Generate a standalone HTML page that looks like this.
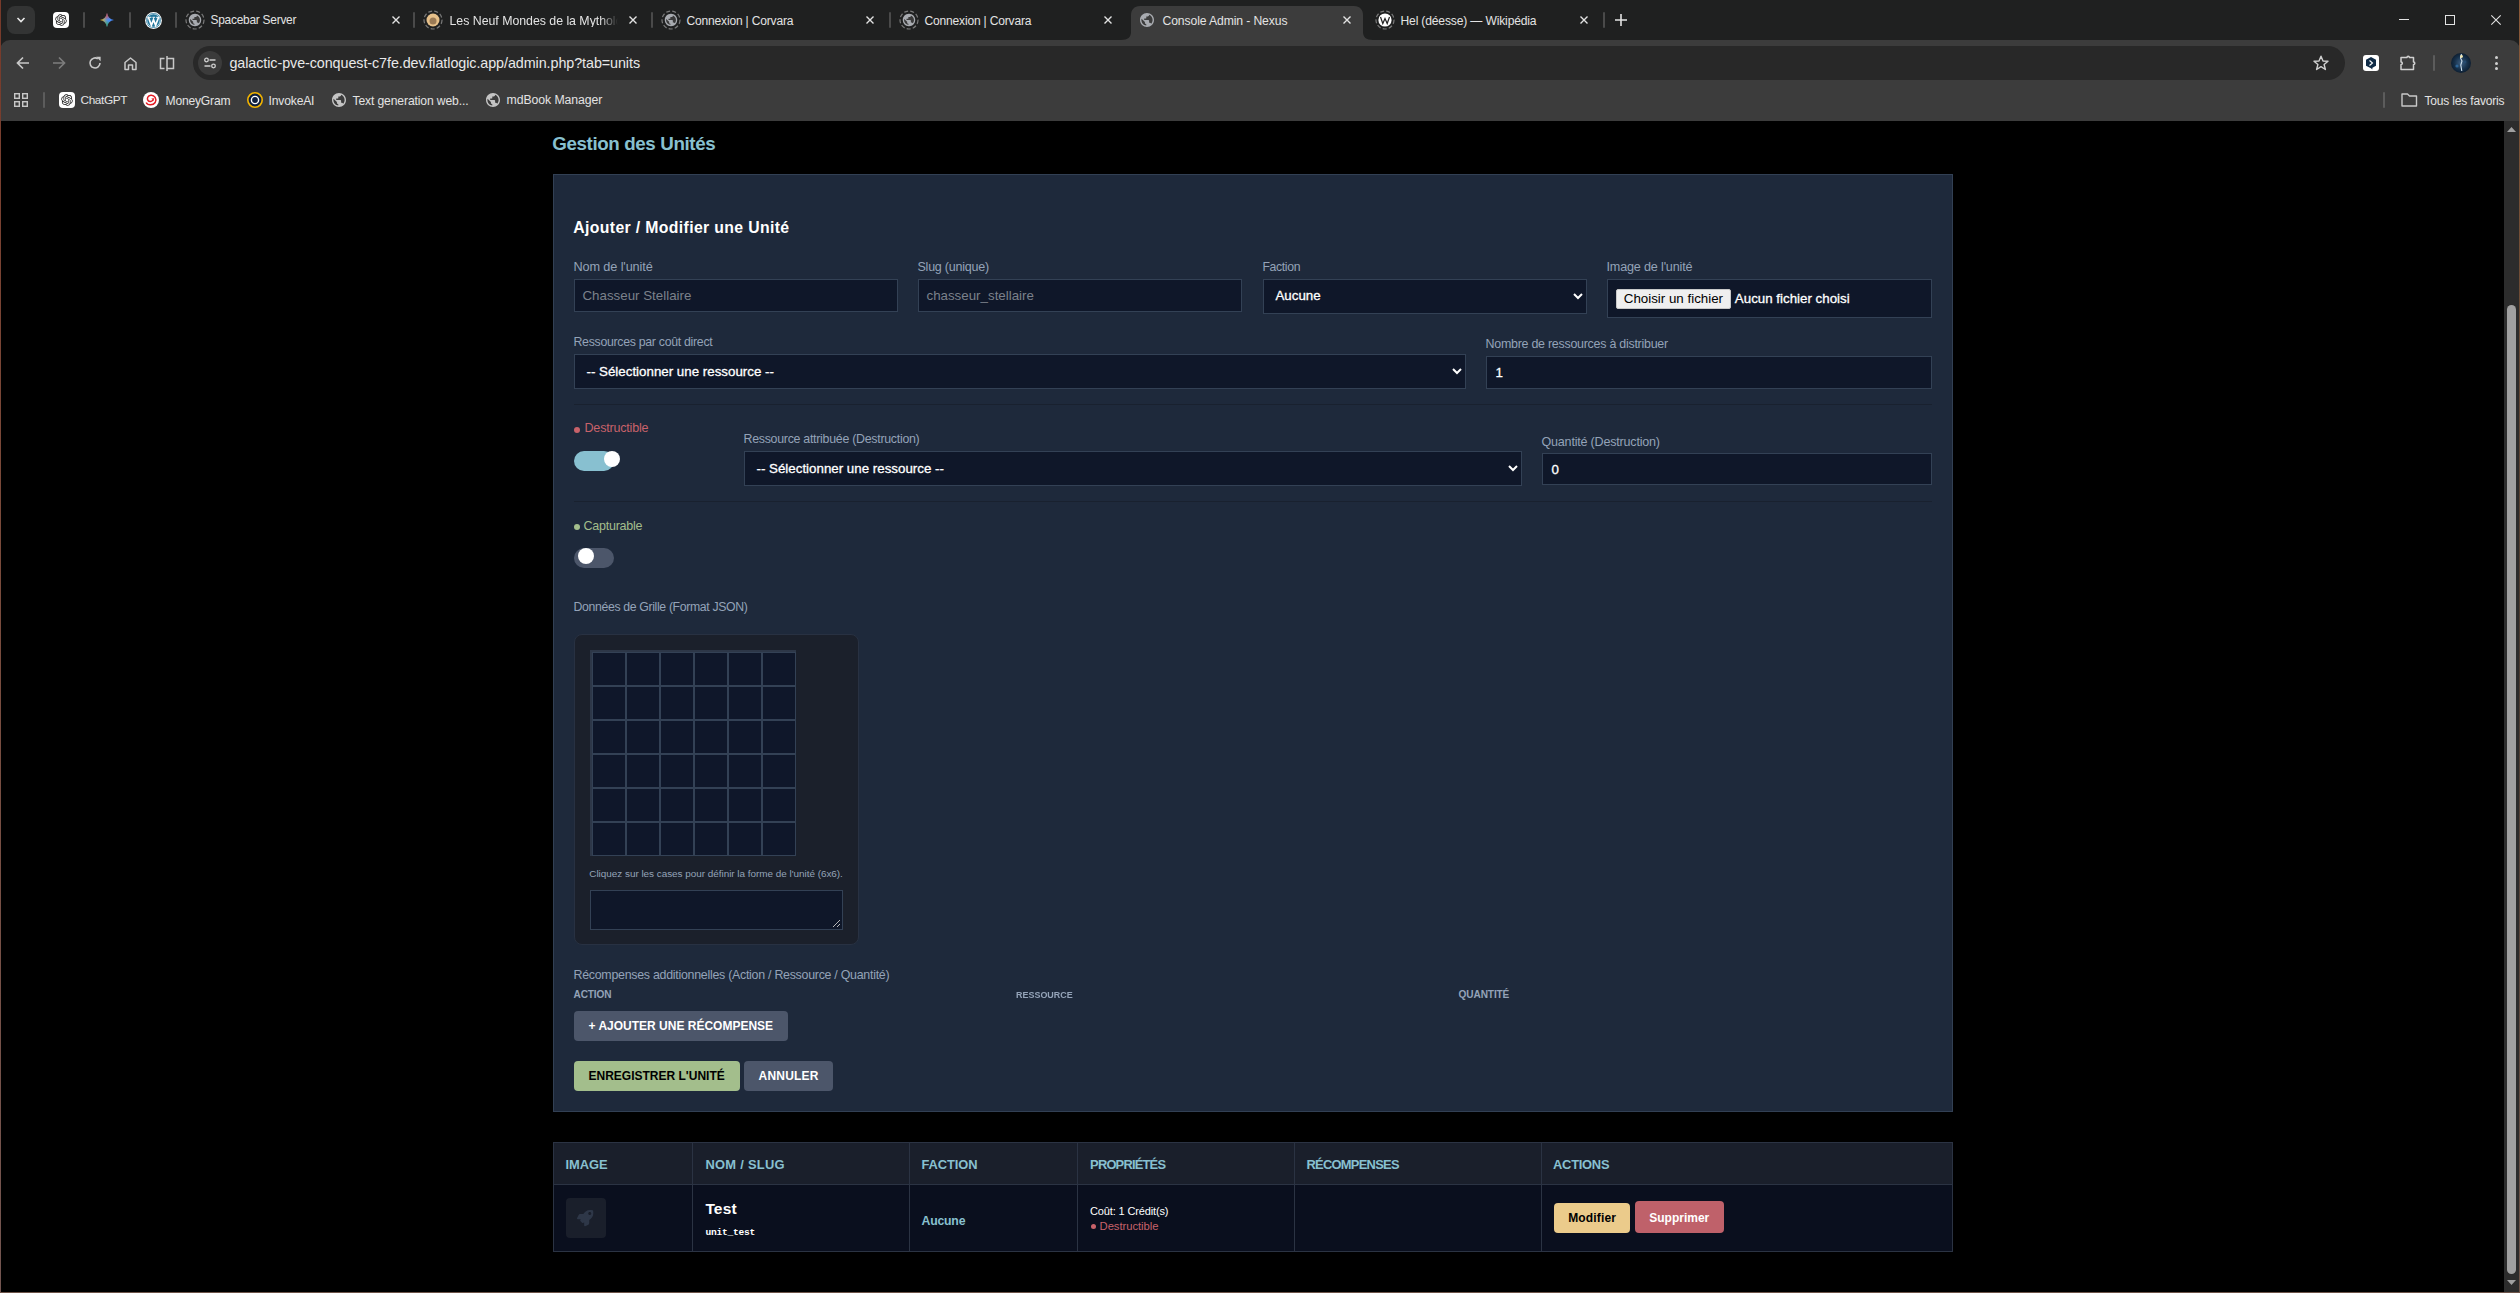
<!DOCTYPE html>
<html lang="fr">
<head>
<meta charset="utf-8">
<title>Console Admin - Nexus</title>
<style>
html,body{margin:0;padding:0;}
body{width:2520px;height:1293px;position:relative;overflow:hidden;background:#000;font-family:"Liberation Sans",sans-serif;}
.a{position:absolute;box-sizing:border-box;}
.t{position:absolute;white-space:pre;line-height:1;}
svg{position:absolute;overflow:visible;}
.sep{position:absolute;width:2px;background:#4a4a4a;border-radius:1px;}
.inp{position:absolute;box-sizing:border-box;background:#0f1729;border:1px solid #334155;}
.btn{position:absolute;box-sizing:border-box;border-radius:4px;}
.hr{position:absolute;height:1px;background:#19212f;}
.vl{position:absolute;width:1px;background:#2b3343;}
</style>
</head>
<body>
<!-- ================= TAB STRIP ================= -->
<div class="a" style="left:0;top:0;width:2520px;height:52px;background:#1f2020;"></div>
<!-- tab search dropdown -->
<div class="a" style="left:7px;top:6px;width:28px;height:28px;border-radius:8px;background:#333434;"></div>
<svg style="left:16px;top:16px" width="10" height="8"><path d="M1.5 2 L5 5.5 L8.5 2" fill="none" stroke="#e8e8e8" stroke-width="1.6"/></svg>
<!-- pinned: chatgpt -->
<div class="a" style="left:53px;top:12px;width:16px;height:16px;border-radius:4px;background:#fff;"></div>
<svg style="left:53px;top:12px" width="16" height="16" viewBox="0 0 16 16"><g transform="translate(2.2 2.2) scale(0.4833)"><path fill="#1a1a1a" d="M22.2819 9.8211a5.9847 5.9847 0 0 0-.5157-4.9108 6.0462 6.0462 0 0 0-6.5098-2.9A6.0651 6.0651 0 0 0 4.9807 4.1818a5.9847 5.9847 0 0 0-3.9977 2.9 6.0462 6.0462 0 0 0 .7427 7.0966 5.98 5.98 0 0 0 .511 4.9107 6.051 6.051 0 0 0 6.5146 2.9001A5.9847 5.9847 0 0 0 13.2599 24a6.0557 6.0557 0 0 0 5.7718-4.2058 5.9894 5.9894 0 0 0 3.9977-2.9001 6.0557 6.0557 0 0 0-.7475-7.0729zm-9.022 12.6081a4.4755 4.4755 0 0 1-2.8764-1.0408l.1419-.0804 4.7783-2.7582a.7948.7948 0 0 0 .3927-.6813v-6.7369l2.02 1.1686a.071.071 0 0 1 .038.052v5.5826a4.504 4.504 0 0 1-4.4945 4.4944zm-9.6607-4.1254a4.4708 4.4708 0 0 1-.5346-3.0137l.142.0852 4.783 2.7582a.7712.7712 0 0 0 .7806 0l5.8428-3.3685v2.3324a.0804.0804 0 0 1-.0332.0615L9.74 19.9502a4.4992 4.4992 0 0 1-6.1408-1.6464zM2.3408 7.8956a4.485 4.485 0 0 1 2.3655-1.9728V11.6a.7664.7664 0 0 0 .3879.6765l5.8144 3.3543-2.0201 1.1685a.0757.0757 0 0 1-.071 0l-4.8303-2.7865A4.504 4.504 0 0 1 2.3408 7.872zm16.5963 3.8558L13.1038 8.364 15.1192 7.2a.0757.0757 0 0 1 .071 0l4.8303 2.7913a4.4944 4.4944 0 0 1-.6765 8.1042v-5.6772a.79.79 0 0 0-.407-.667zm2.0107-3.0231l-.142-.0852-4.7735-2.7818a.7759.7759 0 0 0-.7854 0L9.409 9.2297V6.8974a.0662.0662 0 0 1 .0284-.0615l4.8303-2.7866a4.4992 4.4992 0 0 1 6.6802 4.66zM8.3065 12.863l-2.02-1.1638a.0804.0804 0 0 1-.038-.0567V6.0742a4.4992 4.4992 0 0 1 7.3757-3.4537l-.142.0805L8.704 5.459a.7948.7948 0 0 0-.3927.6813zm1.0976-2.3654l2.602-1.4998 2.6069 1.4998v2.9994l-2.5974 1.4997-2.6067-1.4997Z"/></g></svg>
<div class="sep" style="left:83px;top:12px;height:16px;"></div>
<!-- gemini -->
<svg style="left:100px;top:13px" width="14" height="14" viewBox="0 0 16 16"><defs><linearGradient id="gm1" x1="0" y1="0" x2="1" y2="0"><stop offset="0" stop-color="#fbbc04"/><stop offset="0.55" stop-color="#4c8df6"/><stop offset="1" stop-color="#4285f4"/></linearGradient><radialGradient id="gm2" cx="0.5" cy="0.05" r="0.45"><stop offset="0" stop-color="#ea4335"/><stop offset="1" stop-color="#ea4335" stop-opacity="0"/></radialGradient><radialGradient id="gm3" cx="0.5" cy="0.95" r="0.45"><stop offset="0" stop-color="#34a853"/><stop offset="1" stop-color="#34a853" stop-opacity="0"/></radialGradient></defs><path id="gmp" d="M8 0 C8.7 4.5 11.5 7.3 16 8 C11.5 8.7 8.7 11.5 8 16 C7.3 11.5 4.5 8.7 0 8 C4.5 7.3 7.3 4.5 8 0Z" fill="url(#gm1)"/><path d="M8 0 C8.7 4.5 11.5 7.3 16 8 C11.5 8.7 8.7 11.5 8 16 C7.3 11.5 4.5 8.7 0 8 C4.5 7.3 7.3 4.5 8 0Z" fill="url(#gm2)"/><path d="M8 0 C8.7 4.5 11.5 7.3 16 8 C11.5 8.7 8.7 11.5 8 16 C7.3 11.5 4.5 8.7 0 8 C4.5 7.3 7.3 4.5 8 0Z" fill="url(#gm3)"/></svg>
<div class="sep" style="left:129px;top:12px;height:16px;"></div>
<!-- wordpress -->
<svg style="left:145px;top:12px" width="17" height="17" viewBox="0 0 16 16"><circle cx="8" cy="8" r="7.9" fill="#fff"/><circle cx="8" cy="8" r="7" fill="#21759b"/><circle cx="8" cy="8" r="6.2" fill="none" stroke="#fff" stroke-width="0.6"/><path d="M3.2 5 L6 12.6 L8 7.2 L10 12.6 L12.8 5" fill="none" stroke="#fff" stroke-width="1.6"/><path d="M2.5 5 H6 M7 5 H9.5 M10.5 5 H13.5" stroke="#fff" stroke-width="0.9"/></svg>
<div class="sep" style="left:175px;top:12px;height:16px;"></div>
<!-- tab icons: discarded globe -->
<svg style="left:185px;top:10px" width="20" height="20" viewBox="0 0 20 20"><circle cx="10" cy="10" r="9" fill="none" stroke="#7a7a7a" stroke-width="1.2" stroke-dasharray="4 2.2"/><circle cx="10" cy="10" r="6.3" fill="#3a3a3a"/><g transform="translate(2.56 2.56) scale(0.62)"><path fill="#a8abb0" d="M12 2C6.48 2 2 6.48 2 12s4.48 10 10 10 10-4.48 10-10S17.52 2 12 2zm-1 17.93c-3.95-.49-7-3.85-7-7.93 0-.62.08-1.21.21-1.79L9 15v1c0 1.1.9 2 2 2v1.930zm6.9-2.54c-.26-.81-1-1.390-1.9-1.39h-1v-3c0-.55-.45-1-1-1H8v-2h2c.55 0 1-.45 1-1V7h2c1.1 0 2-.9 2-2v-.41c2.93 1.19 5 4.06 5 7.41 0 2.080-.8 3.970-2.1 5.39z"/></g></svg>
<svg style="left:392px;top:16px" width="8" height="8"><path d="M0.5 0.5 L7.5 7.5 M7.5 0.5 L0.5 7.5" stroke="#e3e3e3" stroke-width="1.4"/></svg>
<div class="sep" style="left:413px;top:12px;height:16px;"></div>
<svg style="left:423px;top:10px" width="20" height="20" viewBox="0 0 20 20"><circle cx="10" cy="10" r="9" fill="none" stroke="#7a7a7a" stroke-width="1.2" stroke-dasharray="4 2.2"/><circle cx="10" cy="10" r="6.5" fill="#e6c08a"/><circle cx="10" cy="11" r="3.5" fill="#9a7a55"/></svg>
<svg style="left:629px;top:16px" width="8" height="8"><path d="M0.5 0.5 L7.5 7.5 M7.5 0.5 L0.5 7.5" stroke="#e3e3e3" stroke-width="1.4"/></svg>
<div class="sep" style="left:651px;top:12px;height:16px;"></div>
<svg style="left:661px;top:10px" width="20" height="20" viewBox="0 0 20 20"><circle cx="10" cy="10" r="9" fill="none" stroke="#7a7a7a" stroke-width="1.2" stroke-dasharray="4 2.2"/><circle cx="10" cy="10" r="6.3" fill="#3a3a3a"/><g transform="translate(2.56 2.56) scale(0.62)"><path fill="#a8abb0" d="M12 2C6.48 2 2 6.48 2 12s4.48 10 10 10 10-4.48 10-10S17.52 2 12 2zm-1 17.93c-3.95-.49-7-3.85-7-7.93 0-.62.08-1.21.21-1.79L9 15v1c0 1.1.9 2 2 2v1.930zm6.9-2.54c-.26-.81-1-1.390-1.9-1.39h-1v-3c0-.55-.45-1-1-1H8v-2h2c.55 0 1-.45 1-1V7h2c1.1 0 2-.9 2-2v-.41c2.93 1.19 5 4.06 5 7.41 0 2.080-.8 3.970-2.1 5.39z"/></g></svg>
<svg style="left:866px;top:16px" width="8" height="8"><path d="M0.5 0.5 L7.5 7.5 M7.5 0.5 L0.5 7.5" stroke="#e3e3e3" stroke-width="1.4"/></svg>
<div class="sep" style="left:889px;top:12px;height:16px;"></div>
<svg style="left:899px;top:10px" width="20" height="20" viewBox="0 0 20 20"><circle cx="10" cy="10" r="9" fill="none" stroke="#7a7a7a" stroke-width="1.2" stroke-dasharray="4 2.2"/><circle cx="10" cy="10" r="6.3" fill="#3a3a3a"/><g transform="translate(2.56 2.56) scale(0.62)"><path fill="#a8abb0" d="M12 2C6.48 2 2 6.48 2 12s4.48 10 10 10 10-4.48 10-10S17.52 2 12 2zm-1 17.93c-3.95-.49-7-3.85-7-7.93 0-.62.08-1.21.21-1.79L9 15v1c0 1.1.9 2 2 2v1.930zm6.9-2.54c-.26-.81-1-1.390-1.9-1.39h-1v-3c0-.55-.45-1-1-1H8v-2h2c.55 0 1-.45 1-1V7h2c1.1 0 2-.9 2-2v-.41c2.93 1.19 5 4.06 5 7.41 0 2.080-.8 3.970-2.1 5.39z"/></g></svg>
<svg style="left:1104px;top:16px" width="8" height="8"><path d="M0.5 0.5 L7.5 7.5 M7.5 0.5 L0.5 7.5" stroke="#e3e3e3" stroke-width="1.4"/></svg>
<!-- active tab -->
<svg style="left:1121px;top:6px" width="252" height="34" viewBox="0 0 252 34"><path d="M0 34 C7 34 10 31 10 26 L10 9 C10 4 13 0 19 0 L233 0 C239 0 242 4 242 9 L242 26 C242 31 245 34 252 34 Z" fill="#3c3c3c"/></svg>
<svg style="left:1140px;top:13px" width="14" height="14" viewBox="0 0 14 14"><g transform="translate(-1.4 -1.4) scale(0.7)"><path fill="#a8abb0" d="M12 2C6.48 2 2 6.48 2 12s4.48 10 10 10 10-4.48 10-10S17.52 2 12 2zm-1 17.93c-3.95-.49-7-3.85-7-7.930 0-.62.08-1.21.21-1.79L9 15v1c0 1.1.9 2 2 2v1.93zm6.9-2.54c-.26-.81-1-1.39-1.9-1.39h-1v-3c0-.55-.45-1-1-1H8v-2h2c.55 0 1-.45 1-1V7h2c1.1 0 2-.9 2-2v-.41c2.93 1.19 5 4.06 5 7.41 0 2.08-.8 3.97-2.1 5.39z"/></g></svg>
<svg style="left:1343px;top:16px" width="8" height="8"><path d="M0.5 0.5 L7.5 7.5 M7.5 0.5 L0.5 7.5" stroke="#e3e3e3" stroke-width="1.4"/></svg>
<!-- wikipedia tab -->
<svg style="left:1375px;top:10px" width="20" height="20" viewBox="0 0 20 20"><circle cx="10" cy="10" r="9" fill="none" stroke="#7a7a7a" stroke-width="1.2" stroke-dasharray="4 2.2"/><circle cx="10" cy="10" r="6.6" fill="#fff"/><path d="M5.5 7 L7.8 13.5 L10 8.5 L12.2 13.5 L14.5 7" fill="none" stroke="#222" stroke-width="1.2"/></svg>
<svg style="left:1580px;top:16px" width="8" height="8"><path d="M0.5 0.5 L7.5 7.5 M7.5 0.5 L0.5 7.5" stroke="#e3e3e3" stroke-width="1.4"/></svg>
<div class="sep" style="left:1603px;top:12px;height:16px;"></div>
<svg style="left:1615px;top:14px" width="12" height="12"><path d="M6 0 V12 M0 6 H12" stroke="#e3e3e3" stroke-width="1.6"/></svg>
<!-- window controls -->
<div class="a" style="left:2399px;top:19px;width:10px;height:1px;background:#e3e3e3;"></div>
<div class="a" style="left:2445px;top:15px;width:10px;height:10px;border:1px solid #e3e3e3;"></div>
<svg style="left:2491px;top:15px" width="10" height="10"><path d="M0.3 0.3 L9.7 9.7 M9.7 0.3 L0.3 9.7" stroke="#e3e3e3" stroke-width="1.1"/></svg>

<!-- ================= TOOLBAR + BOOKMARKS ================= -->
<div class="a" style="left:0;top:40px;width:2520px;height:81px;background:#3c3c3c;border-radius:10px 10px 0 0;"></div>
<!-- back -->
<svg style="left:16px;top:56px" width="14" height="14" viewBox="0 0 14 14"><path d="M13 7 H1.8 M7 1.5 L1.5 7 L7 12.5" fill="none" stroke="#c8c8c8" stroke-width="1.7"/></svg>
<!-- forward -->
<svg style="left:52px;top:56px" width="14" height="14" viewBox="0 0 14 14"><path d="M1 7 H12.2 M7 1.5 L12.5 7 L7 12.5" fill="none" stroke="#7d7d7d" stroke-width="1.7"/></svg>
<!-- reload -->
<svg style="left:88px;top:56px" width="14" height="14" viewBox="0 0 14 14"><path d="M12 7 A5 5 0 1 1 9.8 2.8" fill="none" stroke="#c8c8c8" stroke-width="1.6"/><path d="M8.2 0.8 L12.6 0.8 L12.6 5.2 Z" fill="#c8c8c8"/></svg>
<!-- home -->
<svg style="left:123px;top:56px" width="15" height="15" viewBox="0 0 15 15"><path d="M2 13.5 V6.5 L7.5 2 L13 6.5 V13.5 H9.5 V9 H5.5 V13.5 Z" fill="none" stroke="#c8c8c8" stroke-width="1.5" stroke-linejoin="round"/></svg>
<!-- split -->
<svg style="left:159px;top:55px" width="16" height="17" viewBox="0 0 16 17"><path d="M5.5 3.5 H1.5 V13.5 H5.5 M8 1 V16 M8 3.5 H14.5 V13.5 H8" fill="none" stroke="#c8c8c8" stroke-width="1.5"/></svg>
<!-- omnibox -->
<div class="a" style="left:193px;top:46px;width:2152px;height:34px;border-radius:17px;background:#282828;"></div>
<div class="a" style="left:198px;top:51px;width:24px;height:24px;border-radius:12px;background:#3b3b3b;"></div>
<svg style="left:203px;top:56px" width="14" height="14" viewBox="0 0 14 14"><g fill="none" stroke="#d0d0d0" stroke-width="1.3"><circle cx="3.5" cy="4" r="1.8"/><path d="M6.5 4 H12.5 M1.5 10 H7.5"/><circle cx="10.5" cy="10" r="1.8"/></g></svg>
<!-- star -->
<svg style="left:2313px;top:55px" width="16" height="16" viewBox="0 0 16 16"><path d="M8 1.2 L10 6 L15 6.3 L11.1 9.5 L12.4 14.5 L8 11.7 L3.6 14.5 L4.9 9.5 L1 6.3 L6 6 Z" fill="none" stroke="#d0d0d0" stroke-width="1.4" stroke-linejoin="round"/></svg>
<!-- deepl -->
<div class="a" style="left:2363px;top:55px;width:16px;height:16px;border-radius:3px;background:#fff;"></div>
<svg style="left:2363px;top:55px" width="16" height="16" viewBox="0 0 16 16"><path d="M8 2 L13 4.8 V10.8 L9.5 12.8 L9.2 14.5 L8 13.3 L3 10.8 V4.8 Z" fill="#0f2b46"/><path d="M6.5 5.5 L9.5 8 L6.5 10.5" fill="none" stroke="#fff" stroke-width="1.1"/></svg>
<!-- puzzle -->
<svg style="left:2399px;top:54px" width="18" height="18" viewBox="0 0 18 18"><path d="M2 3.5 H8 A1.2 1.2 0 0 1 10.4 3.5 H14.5 V8 A1.3 1.3 0 0 1 14.5 10.6 V15.5 H2 V10.5 C3.8 10.5 3.8 8 2 8 Z" fill="none" stroke="#d0d0d0" stroke-width="1.5" stroke-linejoin="round"/></svg>
<div class="sep" style="left:2433px;top:55px;height:16px;background:#5c5c5c;"></div>
<!-- avatar -->
<svg style="left:2451px;top:53px" width="20" height="20" viewBox="0 0 20 20"><defs><radialGradient id="av" cx="0.5" cy="0.5" r="0.6"><stop offset="0" stop-color="#3d5f82"/><stop offset="0.55" stop-color="#16304a"/><stop offset="1" stop-color="#081422"/></radialGradient></defs><circle cx="10" cy="10" r="10" fill="url(#av)"/><path d="M10.5 1 L9.5 5 L11 8 L9.8 12 L10.8 18" fill="none" stroke="#cfe0ee" stroke-width="1.1"/><circle cx="10.5" cy="3.5" r="1.4" fill="#f0e6b0"/><circle cx="6" cy="13" r="1.6" fill="#2f6fa8" opacity="0.8"/><circle cx="14" cy="9" r="1.4" fill="#254c74" opacity="0.8"/></svg>
<!-- menu dots -->
<div class="a" style="left:2495px;top:56px;width:3.4px;height:3.4px;border-radius:2px;background:#d0d0d0;"></div>
<div class="a" style="left:2495px;top:61.5px;width:3.4px;height:3.4px;border-radius:2px;background:#d0d0d0;"></div>
<div class="a" style="left:2495px;top:67px;width:3.4px;height:3.4px;border-radius:2px;background:#d0d0d0;"></div>

<!-- bookmarks bar -->
<svg style="left:14px;top:93px" width="14" height="14" viewBox="0 0 14 14"><g fill="none" stroke="#c8c8c8" stroke-width="1.4"><rect x="0.7" y="0.7" width="4.6" height="4.6"/><rect x="8.7" y="0.7" width="4.6" height="4.6"/><rect x="0.7" y="8.7" width="4.6" height="4.6"/><rect x="8.7" y="8.7" width="4.6" height="4.6"/></g></svg>
<div class="sep" style="left:43px;top:92px;height:16px;background:#5c5c5c;"></div>
<div class="a" style="left:59px;top:92px;width:16px;height:16px;border-radius:4px;background:#fff;"></div>
<svg style="left:59px;top:92px" width="16" height="16" viewBox="0 0 16 16"><g transform="translate(2.2 2.2) scale(0.4833)"><path fill="#1a1a1a" d="M22.2819 9.8211a5.9847 5.9847 0 0 0-.5157-4.9108 6.0462 6.0462 0 0 0-6.5098-2.9A6.0651 6.0651 0 0 0 4.9807 4.1818a5.9847 5.9847 0 0 0-3.9977 2.9 6.0462 6.0462 0 0 0 .7427 7.0966 5.98 5.98 0 0 0 .511 4.9107 6.051 6.051 0 0 0 6.5146 2.9001A5.9847 5.9847 0 0 0 13.2599 24a6.0557 6.0557 0 0 0 5.7718-4.2058 5.9894 5.9894 0 0 0 3.9977-2.9001 6.0557 6.0557 0 0 0-.7475-7.0729zm-9.022 12.6081a4.4755 4.4755 0 0 1-2.8764-1.0408l.1419-.0804 4.7783-2.7582a.7948.7948 0 0 0 .3927-.6813v-6.7369l2.02 1.1686a.071.071 0 0 1 .038.052v5.5826a4.504 4.504 0 0 1-4.4945 4.4944zm-9.6607-4.1254a4.4708 4.4708 0 0 1-.5346-3.0137l.142.0852 4.783 2.7582a.7712.7712 0 0 0 .7806 0l5.8428-3.3685v2.3324a.0804.0804 0 0 1-.0332.0615L9.74 19.9502a4.4992 4.4992 0 0 1-6.1408-1.6464zM2.3408 7.8956a4.485 4.485 0 0 1 2.3655-1.9728V11.6a.7664.7664 0 0 0 .3879.6765l5.8144 3.3543-2.0201 1.1685a.0757.0757 0 0 1-.071 0l-4.8303-2.7865A4.504 4.504 0 0 1 2.3408 7.872zm16.5963 3.8558L13.1038 8.364 15.1192 7.2a.0757.0757 0 0 1 .071 0l4.8303 2.7913a4.4944 4.4944 0 0 1-.6765 8.1042v-5.6772a.79.79 0 0 0-.407-.667zm2.0107-3.0231l-.142-.0852-4.7735-2.7818a.7759.7759 0 0 0-.7854 0L9.409 9.2297V6.8974a.0662.0662 0 0 1 .0284-.0615l4.8303-2.7866a4.4992 4.4992 0 0 1 6.6802 4.66zM8.3065 12.863l-2.02-1.1638a.0804.0804 0 0 1-.038-.0567V6.0742a4.4992 4.4992 0 0 1 7.3757-3.4537l-.142.0805L8.704 5.459a.7948.7948 0 0 0-.3927.6813zm1.0976-2.3654l2.602-1.4998 2.6069 1.4998v2.9994l-2.5974 1.4997-2.6067-1.4997Z"/></g></svg>
<svg style="left:143px;top:92px" width="16" height="16" viewBox="0 0 16 16"><circle cx="8" cy="8" r="8" fill="#fff"/><path d="M3.2 10.5 C4.5 13.5 10 13.8 12.2 10.5 C14.2 7 11.5 2.8 7.8 3.2 C4.8 3.5 3.6 6.6 5 8.5 C6.2 10.2 9 9.8 10 8" fill="none" stroke="#e31b23" stroke-width="1.5"/><path d="M8.3 6.6 L11.2 6.2 L10.6 9.1 Z" fill="#e31b23"/></svg>
<svg style="left:247px;top:92px" width="16" height="16" viewBox="0 0 16 16"><circle cx="8" cy="8" r="7.2" fill="#0f1f3d" stroke="#f2b400" stroke-width="1.6"/><circle cx="8" cy="8" r="3.6" fill="none" stroke="#fff" stroke-width="1.4"/><circle cx="8" cy="8" r="2" fill="#0f1f3d"/></svg>
<svg style="left:332px;top:93px" width="14" height="14" viewBox="0 0 14 14"><g transform="translate(-1.4 -1.4) scale(0.7)"><path fill="#c4c4c4" d="M12 2C6.48 2 2 6.48 2 12s4.48 10 10 10 10-4.48 10-10S17.52 2 12 2zm-1 17.93c-3.95-.49-7-3.85-7-7.93 0-.62.08-1.21.21-1.79L9 15v1c0 1.1.9 2 2 2v1.93zm6.9-2.54c-.26-.81-1-1.39-1.9-1.39h-1v-3c0-.55-.45-1-1-1H8v-2h2c.55 0 1-.45 1-1V7h2c1.1 0 2-.9 2-2v-.41c2.93 1.19 5 4.06 5 7.41 0 2.08-.8 3.97-2.1 5.39z"/></g></svg>
<svg style="left:486px;top:93px" width="14" height="14" viewBox="0 0 14 14"><g transform="translate(-1.4 -1.4) scale(0.7)"><path fill="#c4c4c4" d="M12 2C6.48 2 2 6.48 2 12s4.48 10 10 10 10-4.48 10-10S17.52 2 12 2zm-1 17.93c-3.95-.49-7-3.85-7-7.93 0-.62.08-1.21.21-1.79L9 15v1c0 1.1.9 2 2 2v1.93zm6.9-2.54c-.26-.81-1-1.39-1.9-1.39h-1v-3c0-.55-.45-1-1-1H8v-2h2c.55 0 1-.45 1-1V7h2c1.1 0 2-.9 2-2v-.41c2.93 1.19 5 4.06 5 7.41 0 2.08-.8 3.97-2.1 5.39z"/></g></svg>
<div class="sep" style="left:2383px;top:92px;height:16px;background:#5c5c5c;"></div>
<svg style="left:2401px;top:93px" width="17" height="14" viewBox="0 0 17 14"><path d="M1 1 H6.5 L8.5 3 H15.5 V13 H1 Z" fill="none" stroke="#c8c8c8" stroke-width="1.4" stroke-linejoin="round"/></svg>

<!-- window border -->
<div class="a" style="left:0;top:0;width:1px;height:1293px;background:linear-gradient(#773a2a,#7a4a3a 40%,#735550);"></div>
<div class="a" style="left:2519px;top:0;width:1px;height:1293px;background:linear-gradient(#8a5a3a,#4a3a30 50%,#6e5449);"></div>
<div class="a" style="left:0;top:1292px;width:2520px;height:1px;background:#6e5449;"></div>

<!-- ================= PAGE ================= -->
<!-- scrollbar -->
<div class="a" style="left:2504px;top:121px;width:15px;height:1171px;background:#2c2c2c;"></div>
<div class="a" style="left:2507px;top:305px;width:9px;height:969px;border-radius:4.5px;background:#a0a0a0;"></div>
<svg style="left:2507px;top:127px" width="9" height="5"><path d="M0 5 L4.5 0 L9 5 Z" fill="#a0a0a0"/></svg>
<svg style="left:2507px;top:1280px" width="9" height="5"><path d="M0 0 L4.5 5 L9 0 Z" fill="#a0a0a0"/></svg>

<!-- form container -->
<div class="a" style="left:553px;top:174px;width:1400px;height:938px;background:#1e293b;border:1px solid #324054;"></div>

<!-- row1 inputs -->
<div class="inp" style="left:574px;top:279px;width:324px;height:33px;"></div>
<div class="inp" style="left:918px;top:279px;width:324px;height:33px;"></div>
<div class="inp" style="left:1263px;top:279px;width:324px;height:35px;"></div>
<svg style="left:1573px;top:293px" width="10" height="7"><path d="M1 1 L5 5 L9 1" fill="none" stroke="#fff" stroke-width="2"/></svg>
<div class="inp" style="left:1607px;top:279px;width:325px;height:39px;"></div>
<div class="a" style="left:1616px;top:288.5px;width:115px;height:20.5px;background:#efefef;border:1px solid #c8c8c8;border-radius:2px;"></div>

<!-- row2 -->
<div class="inp" style="left:574px;top:354px;width:892px;height:35px;"></div>
<svg style="left:1452px;top:368px" width="10" height="7"><path d="M1 1 L5 5 L9 1" fill="none" stroke="#fff" stroke-width="2"/></svg>
<div class="inp" style="left:1486px;top:356px;width:446px;height:33px;"></div>
<div class="hr" style="left:574px;top:404px;width:1358px;"></div>

<!-- row3 -->
<div class="a" style="left:574px;top:427px;width:6px;height:6px;border-radius:3px;background:#c8626a;"></div>
<div class="a" style="left:574px;top:451px;width:40px;height:20px;border-radius:10px;background:#88c0d0;"></div>
<div class="a" style="left:604px;top:451px;width:16px;height:16px;border-radius:8px;background:#fff;"></div>
<div class="inp" style="left:744px;top:451px;width:778px;height:35px;"></div>
<svg style="left:1508px;top:464.5px" width="10" height="7"><path d="M1 1 L5 5 L9 1" fill="none" stroke="#fff" stroke-width="2"/></svg>
<div class="inp" style="left:1542px;top:453px;width:390px;height:32px;"></div>
<div class="hr" style="left:574px;top:501px;width:1358px;"></div>

<!-- row4 -->
<div class="a" style="left:574px;top:524px;width:6px;height:6px;border-radius:3px;background:#a3be8c;"></div>
<div class="a" style="left:574px;top:548px;width:40px;height:20px;border-radius:10px;background:#4c566a;"></div>
<div class="a" style="left:578px;top:548px;width:16px;height:16px;border-radius:8px;background:#fff;"></div>

<!-- grid box -->
<div class="a" style="left:574px;top:634px;width:285px;height:311px;border-radius:8px;background:#1b202b;border:1px solid #283142;"></div>
<div class="a" style="left:590px;top:650px;width:206px;height:206px;background:#2d3748;"></div>
<svg style="left:592px;top:652px" width="204" height="204" viewBox="0 0 204 204">
<rect x="0" y="0" width="204" height="204" fill="#334155"/>
<g fill="#0f172a">
<rect x="1" y="1" width="32" height="32"/><rect x="1" y="35" width="32" height="32"/><rect x="1" y="69" width="32" height="32"/><rect x="1" y="103" width="32" height="32"/><rect x="1" y="137" width="32" height="32"/><rect x="1" y="171" width="32" height="32"/><rect x="35" y="1" width="32" height="32"/><rect x="35" y="35" width="32" height="32"/><rect x="35" y="69" width="32" height="32"/><rect x="35" y="103" width="32" height="32"/><rect x="35" y="137" width="32" height="32"/><rect x="35" y="171" width="32" height="32"/><rect x="69" y="1" width="32" height="32"/><rect x="69" y="35" width="32" height="32"/><rect x="69" y="69" width="32" height="32"/><rect x="69" y="103" width="32" height="32"/><rect x="69" y="137" width="32" height="32"/><rect x="69" y="171" width="32" height="32"/><rect x="103" y="1" width="32" height="32"/><rect x="103" y="35" width="32" height="32"/><rect x="103" y="69" width="32" height="32"/><rect x="103" y="103" width="32" height="32"/><rect x="103" y="137" width="32" height="32"/><rect x="103" y="171" width="32" height="32"/><rect x="137" y="1" width="32" height="32"/><rect x="137" y="35" width="32" height="32"/><rect x="137" y="69" width="32" height="32"/><rect x="137" y="103" width="32" height="32"/><rect x="137" y="137" width="32" height="32"/><rect x="137" y="171" width="32" height="32"/><rect x="171" y="1" width="32" height="32"/><rect x="171" y="35" width="32" height="32"/><rect x="171" y="69" width="32" height="32"/><rect x="171" y="103" width="32" height="32"/><rect x="171" y="137" width="32" height="32"/><rect x="171" y="171" width="32" height="32"/>
</g></svg>
<div class="inp" style="left:590px;top:890px;width:253px;height:40px;"></div>
<svg style="left:832px;top:919px" width="9" height="9"><path d="M8 1 L1 8 M8 5 L5 8" stroke="#b8b8b8" stroke-width="1"/></svg>

<!-- buttons -->
<div class="btn" style="left:574px;top:1011px;width:214px;height:30px;background:#4c566a;"></div>
<div class="btn" style="left:574px;top:1061px;width:166px;height:30px;background:#a3be8c;"></div>
<div class="btn" style="left:744px;top:1061px;width:89px;height:30px;background:#4c566a;"></div>

<!-- table -->
<div class="a" style="left:553px;top:1142px;width:1400px;height:110px;background:#0a0f1e;border:1px solid #2b3343;"></div>
<div class="a" style="left:554px;top:1143px;width:1398px;height:41px;background:#1a1f2b;"></div>
<div class="a" style="left:554px;top:1184px;width:1398px;height:1px;background:#2b3343;"></div>
<div class="vl" style="left:692px;top:1143px;height:108px;"></div>
<div class="vl" style="left:909px;top:1143px;height:108px;"></div>
<div class="vl" style="left:1077px;top:1143px;height:108px;"></div>
<div class="vl" style="left:1294px;top:1143px;height:108px;"></div>
<div class="vl" style="left:1541px;top:1143px;height:108px;"></div>
<div class="a" style="left:566px;top:1198px;width:40px;height:40px;border-radius:4px;background:#1a1f2b;"></div>
<svg style="left:577.3px;top:1210px" width="16.3" height="16.3" viewBox="0 0 512 512"><path fill="#2e3748" d="M505.1 19.1C503.8 13 499 8.2 492.9 6.9 460.7 0 435.5 0 410.4 0 307.2 0 245.3 55.2 199.1 128H94.9c-18.2 0-34.8 10.3-42.9 26.5L2.6 253.3c-8 16 3.6 34.7 21.5 34.7h95.1c-5.9 12.8-11.9 25.5-18 37.7-3.1 6.2-1.9 13.6 3 18.5l63.6 63.6c4.9 4.9 12.3 6.1 18.5 3 12.2-6.1 24.9-12 37.7-17.9V488c0 17.8 18.8 29.4 34.7 21.5l98.7-49.4c16.3-8.1 26.5-24.8 26.5-42.9V312.8c72.6-46.3 128-108.4 128-211.1.1-25.2.1-50.4-6.8-82.6zM400 160c-26.5 0-48-21.5-48-48s21.5-48 48-48 48 21.5 48 48-21.5 48-48 48z"/></svg>
<div class="a" style="left:1091px;top:1224px;width:5px;height:5px;border-radius:3px;background:#c8626a;"></div>
<div class="btn" style="left:1554px;top:1203px;width:76px;height:30px;background:#ebcb8b;"></div>
<div class="btn" style="left:1635px;top:1201px;width:89px;height:32px;background:#bf616a;"></div>

<span class="t" style="left:210.52px;top:15.40px;font-size:11.92px;color:#e3e3e3;letter-spacing:-0.245px;">Spacebar Server</span>
<span class="t" style="left:449.51px;top:15.04px;font-size:12.35px;color:#e3e3e3;letter-spacing:-0.023px;-webkit-mask-image:linear-gradient(90deg,#000 150px,transparent 168px);">Les Neuf Mondes de la Mytholo</span>
<span class="t" style="left:686.52px;top:15.30px;font-size:12.04px;color:#e3e3e3;letter-spacing:-0.176px;">Connexion | Corvara</span>
<span class="t" style="left:924.52px;top:15.30px;font-size:12.04px;color:#e3e3e3;letter-spacing:-0.176px;">Connexion | Corvara</span>
<span class="t" style="left:1162.51px;top:15.18px;font-size:12.18px;color:#e3e3e3;letter-spacing:-0.111px;">Console Admin - Nexus</span>
<span class="t" style="left:1400.52px;top:15.27px;font-size:12.08px;color:#e3e3e3;letter-spacing:-0.155px;">Hel (déesse) — Wikipédia</span>
<span class="t" style="left:229.43px;top:55.85px;font-size:14.34px;color:#e8e8e8;letter-spacing:-0.071px;">galactic-pve-conquest-c7fe.dev.flatlogic.app/admin.php?tab=units</span>
<span class="t" style="left:80.53px;top:94.79px;font-size:11.82px;color:#e3e3e3;letter-spacing:-0.379px;">ChatGPT</span>
<span class="t" style="left:165.52px;top:94.55px;font-size:12.1px;color:#e3e3e3;letter-spacing:-0.196px;">MoneyGram</span>
<span class="t" style="left:268.52px;top:94.55px;font-size:12.1px;color:#e3e3e3;letter-spacing:-0.157px;">InvokeAI</span>
<span class="t" style="left:352.51px;top:94.53px;font-size:12.13px;color:#e3e3e3;letter-spacing:-0.123px;">Text generation web...</span>
<span class="t" style="left:506.51px;top:94.40px;font-size:12.28px;color:#e3e3e3;letter-spacing:-0.070px;">mdBook Manager</span>
<span class="t" style="left:2424.52px;top:94.64px;font-size:12.0px;color:#e3e3e3;letter-spacing:-0.177px;">Tous les favoris</span>
<span class="t" style="left:552.25px;top:134.71px;font-size:18.76px;color:#88c0d0;font-weight:700;letter-spacing:-0.377px;">Gestion des Unités</span>
<span class="t" style="left:573.37px;top:220.42px;font-size:15.8px;color:#fff;font-weight:700;letter-spacing:0.352px;">Ajouter / Modifier une Unité</span>
<span class="t" style="left:573.49px;top:260.62px;font-size:12.73px;color:#94a3b8;letter-spacing:-0.128px;">Nom de l'unité</span>
<span class="t" style="left:917.50px;top:260.80px;font-size:12.51px;color:#94a3b8;letter-spacing:-0.232px;">Slug (unique)</span>
<span class="t" style="left:1262.51px;top:261.02px;font-size:12.26px;color:#94a3b8;letter-spacing:-0.372px;">Faction</span>
<span class="t" style="left:1606.50px;top:260.72px;font-size:12.61px;color:#94a3b8;letter-spacing:-0.175px;">Image de l'unité</span>
<span class="t" style="left:573.51px;top:335.55px;font-size:12.34px;color:#94a3b8;letter-spacing:-0.298px;">Ressources par coût direct</span>
<span class="t" style="left:1485.50px;top:338.06px;font-size:12.44px;color:#94a3b8;letter-spacing:-0.255px;">Nombre de ressources à distribuer</span>
<span class="t" style="left:743.50px;top:433.11px;font-size:12.38px;color:#94a3b8;letter-spacing:-0.275px;">Ressource attribuée (Destruction)</span>
<span class="t" style="left:1541.50px;top:436.17px;font-size:12.55px;color:#94a3b8;letter-spacing:-0.200px;">Quantité (Destruction)</span>
<span class="t" style="left:573.51px;top:601.21px;font-size:12.27px;color:#94a3b8;letter-spacing:-0.345px;">Données de Grille (Format JSON)</span>
<span class="t" style="left:573.50px;top:969.10px;font-size:12.4px;color:#94a3b8;letter-spacing:-0.267px;">Récompenses additionnelles (Action / Ressource / Quantité)</span>
<span class="t" style="left:584.50px;top:422.37px;font-size:12.55px;color:#c8626a;letter-spacing:-0.205px;">Destructible</span>
<span class="t" style="left:583.50px;top:520.20px;font-size:12.52px;color:#a3be8c;letter-spacing:-0.249px;">Capturable</span>
<span class="t" style="left:582.47px;top:288.71px;font-size:13.333px;color:#7b818b;">Chasseur Stellaire</span>
<span class="t" style="left:926.47px;top:288.71px;font-size:13.333px;color:#7b818b;">chasseur_stellaire</span>
<span class="t" style="left:1275.47px;top:289.41px;font-size:13.333px;color:#fff;-webkit-text-stroke:0.3px #fff;">Aucune</span>
<span class="t" style="left:1623.77px;top:291.71px;font-size:13.333px;color:#000;">Choisir un fichier</span>
<span class="t" style="left:1734.87px;top:291.71px;font-size:13.333px;color:#fff;-webkit-text-stroke:0.3px #fff;">Aucun fichier choisi</span>
<span class="t" style="left:586.47px;top:364.71px;font-size:13.333px;color:#fff;-webkit-text-stroke:0.3px #fff;">-- Sélectionner une ressource --</span>
<span class="t" style="left:1495.47px;top:365.71px;font-size:13.333px;color:#fff;-webkit-text-stroke:0.3px #fff;">1</span>
<span class="t" style="left:756.47px;top:462.01px;font-size:13.333px;color:#fff;-webkit-text-stroke:0.3px #fff;">-- Sélectionner une ressource --</span>
<span class="t" style="left:1551.47px;top:462.71px;font-size:13.333px;color:#fff;-webkit-text-stroke:0.3px #fff;">0</span>
<span class="t" style="left:589.30px;top:868.58px;font-size:9.94px;color:#94a3b8;letter-spacing:-0.024px;">Cliquez sur les cases pour définir la forme de l'unité (6x6).</span>
<span class="t" style="left:573.60px;top:990.26px;font-size:10.08px;color:#94a3b8;font-weight:700;letter-spacing:-0.163px;">ACTION</span>
<span class="t" style="left:1015.60px;top:990.41px;font-size:9.9px;color:#94a3b8;font-weight:700;transform:scaleX(0.9066);transform-origin:0 0;">RESSOURCE</span>
<span class="t" style="left:1458.60px;top:990.23px;font-size:10.12px;color:#94a3b8;font-weight:700;letter-spacing:-0.129px;">QUANTITÉ</span>
<span class="t" style="left:588.52px;top:1019.84px;font-size:12px;color:#fff;font-weight:700;">+ AJOUTER UNE RÉCOMPENSE</span>
<span class="t" style="left:588.52px;top:1070.34px;font-size:12.0px;color:#000;font-weight:700;">ENREGISTRER L'UNITÉ</span>
<span class="t" style="left:758.52px;top:1070.34px;font-size:12px;color:#fff;font-weight:700;letter-spacing:0.215px;">ANNULER</span>
<span class="t" style="left:565.48px;top:1158.87px;font-size:12.9px;color:#88c0d0;font-weight:700;letter-spacing:-0.058px;">IMAGE</span>
<span class="t" style="left:705.48px;top:1158.87px;font-size:12.9px;color:#88c0d0;font-weight:700;letter-spacing:0.266px;">NOM / SLUG</span>
<span class="t" style="left:921.48px;top:1158.87px;font-size:12.9px;color:#88c0d0;font-weight:700;letter-spacing:-0.091px;">FACTION</span>
<span class="t" style="left:1090.08px;top:1158.87px;font-size:12.9px;color:#88c0d0;font-weight:700;letter-spacing:-0.796px;">PROPRIÉTÉS</span>
<span class="t" style="left:1306.48px;top:1158.87px;font-size:12.9px;color:#88c0d0;font-weight:700;letter-spacing:-0.725px;">RÉCOMPENSES</span>
<span class="t" style="left:1553.08px;top:1158.87px;font-size:12.9px;color:#88c0d0;font-weight:700;letter-spacing:-0.264px;">ACTIONS</span>
<span class="t" style="left:705.38px;top:1200.87px;font-size:15.5px;color:#fff;font-weight:700;letter-spacing:0.169px;">Test</span>
<span class="t" style="left:705.62px;top:1227.64px;font-size:9.6px;color:#fff;font-weight:700;font-family:'Liberation Mono', monospace;letter-spacing:-0.258px;">unit_test</span>
<span class="t" style="left:921.51px;top:1215.09px;font-size:12.29px;color:#88c0d0;font-weight:700;letter-spacing:-0.215px;">Aucune</span>
<span class="t" style="left:1090.06px;top:1205.65px;font-size:11.04px;color:#fff;letter-spacing:-0.158px;">Coût: 1 Crédit(s)</span>
<span class="t" style="left:1099.55px;top:1221.25px;font-size:11.28px;color:#c8626a;letter-spacing:-0.056px;">Destructible</span>
<span class="t" style="left:1568.22px;top:1211.84px;font-size:12px;color:#000;font-weight:700;letter-spacing:0.141px;">Modifier</span>
<span class="t" style="left:1649.22px;top:1211.84px;font-size:12px;color:#fff;font-weight:700;letter-spacing:0.006px;">Supprimer</span>
</body>
</html>
